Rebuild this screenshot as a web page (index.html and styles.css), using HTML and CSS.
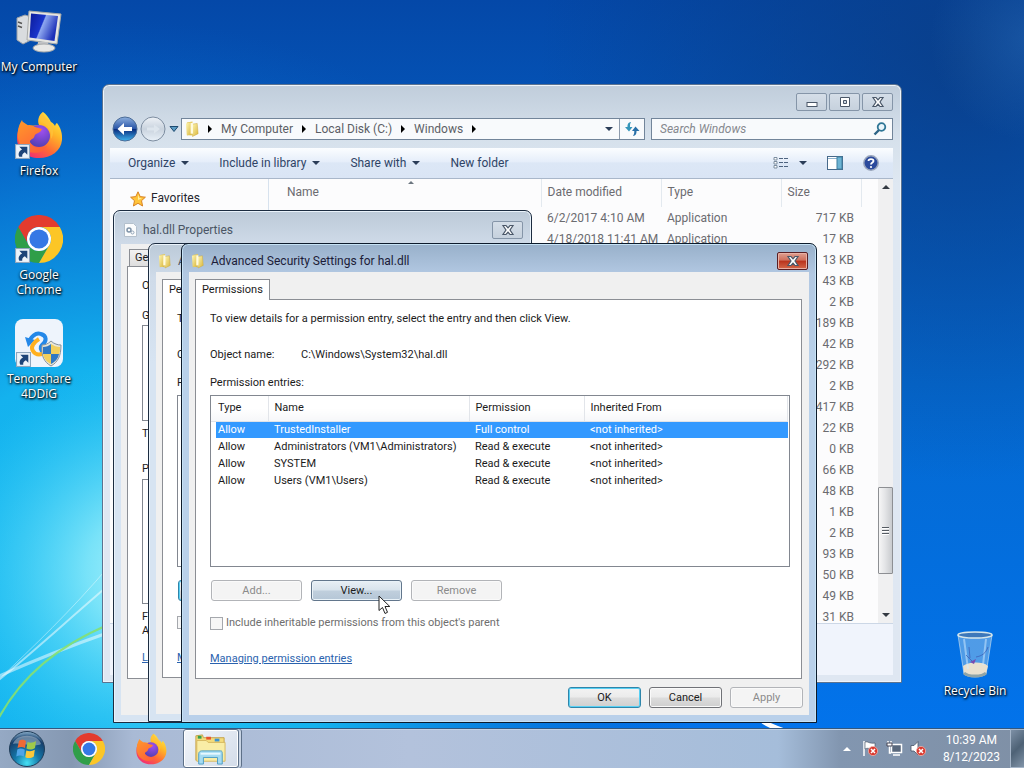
FILE: index.html
```html
<!DOCTYPE html>
<html lang="en">
<head>
    <meta charset="utf-8">
    <title>Desktop</title>
    <link rel="stylesheet" href="styles.css">
</head>
<body>
    <!-- shared icons -->
    <svg class="defs" width="0" height="0" aria-hidden="true">
        <defs>
            <linearGradient id="ff-body" x1="0.85" y1="0" x2="0.2" y2="1">
                <stop offset="0" stop-color="#fff14a"/>
                <stop offset="0.35" stop-color="#ffb628"/>
                <stop offset="0.65" stop-color="#ff6a35"/>
                <stop offset="1" stop-color="#f0267c"/>
            </linearGradient>
            <linearGradient id="ff-head" x1="0" y1="0" x2="0.6" y2="1">
                <stop offset="0" stop-color="#ff9a2a"/>
                <stop offset="1" stop-color="#ff6338"/>
            </linearGradient>
            <radialGradient id="ff-globe" cx="0.6" cy="0.25" r="0.8">
                <stop offset="0" stop-color="#a04ff0"/>
                <stop offset="1" stop-color="#4f3fb0"/>
            </radialGradient>
            <linearGradient id="folder-front" x1="0" y1="0" x2="1" y2="1">
                <stop offset="0" stop-color="#fff8b8"/>
                <stop offset="1" stop-color="#d9b63c"/>
            </linearGradient>
            <linearGradient id="screen" x1="0" y1="0" x2="1" y2="0.4">
                <stop offset="0" stop-color="#0a1a98"/>
                <stop offset="0.5" stop-color="#1a35cc"/>
                <stop offset="0.54" stop-color="#8fa8f0"/>
                <stop offset="1" stop-color="#1c30b8"/>
            </linearGradient>
            <radialGradient id="orb" cx="0.5" cy="0.9" r="0.9">
                <stop offset="0" stop-color="#45e0f4"/>
                <stop offset="0.4" stop-color="#1477a8"/>
                <stop offset="0.8" stop-color="#163f6c"/>
                <stop offset="1" stop-color="#8fb4d0"/>
            </radialGradient>
            <linearGradient id="back-blue" x1="0" y1="0" x2="0" y2="1">
                <stop offset="0" stop-color="#8eb0de"/>
                <stop offset="0.48" stop-color="#2a56a8"/>
                <stop offset="0.52" stop-color="#0b2f80"/>
                <stop offset="1" stop-color="#3fb4ee"/>
            </linearGradient>
            <linearGradient id="forward-grey" x1="0" y1="0" x2="0" y2="1">
                <stop offset="0" stop-color="#eef2f7"/>
                <stop offset="0.5" stop-color="#c9d3de"/>
                <stop offset="1" stop-color="#e9f1f8"/>
            </linearGradient>
        </defs>
        <symbol id="chrome" viewBox="0 0 48 48">
            <path fill="#e33b2e" d="M24 12H44.8A24 24 0 0 0 3.2 12L13.6 30A12 12 0 0 1 24 12z"/>
            <path fill="#2f9e49" d="M13.6 30L3.2 12A24 24 0 0 0 24 48L34.4 30A12 12 0 0 1 13.6 30z"/>
            <path fill="#fcc626" d="M34.4 30L24 48A24 24 0 0 0 44.8 12H24A12 12 0 0 1 34.4 30z"/>
            <circle cx="24" cy="24" r="12" fill="#fff"/>
            <circle cx="24" cy="24" r="9.6" fill="#3578e5"/>
        </symbol>
        <symbol id="firefox" viewBox="0 0 48 48">
            <path fill="url(#ff-body)" d="M28 1C31 3 34 7 36 11C38 12 39 13 40 15C41 12 42 12 42 12C46 17 47.500 23 47 29C46 40 36 47 24 47C11 47 2 39 2 27C2 20 4 15 8 11L14 15L24 14C22 9 24 4 28 1z"/>
            <circle cx="24" cy="25" r="11" fill="url(#ff-globe)"/>
            <path fill="url(#ff-head)" d="M3 21C3 16 5 12 7 9C8 12 9 14 11 15C14 13 17 14 20 16C22 17 25 17 27 18C26 21 23 22 21 23C19 24 20 27 17 28C15 29 14 31 16 33C19 38 27 38 32 35C28 43 16 44 9 38C4 34 2 27 3 21z"/>
            <path fill="#ffc23a" d="M27 11C33 14 37 20 36 28C40 22 38 14 33 9C30 6 28 4 28 1C24 4 23 8 27 11z" opacity=".8"/>
        </symbol>
        <symbol id="shortcut" viewBox="0 0 14 14">
            <rect x=".5" y=".5" width="13" height="13" fill="#eef4fa" stroke="#8fa6bd"/>
            <path fill="#1d4478" d="M4 2.500H11.500V10L9.200 7.700C7 9 6.500 10 6.800 12H4C2.500 9 4 6.500 6.600 5.200z"/>
        </symbol>
        <symbol id="folder" viewBox="0 0 16 16">
            <path fill="#e5c95c" d="M2 1L8 0V14L2 15z"/>
            <path fill="url(#folder-front)" d="M1 2L6 1L7 15L2 14z"/>
            <path fill="url(#folder-front)" d="M7 3L13 2L14 13L8 16z" stroke="#c9a63a" stroke-width=".5"/>
            <path fill="#fffbe0" d="M6 1.500H8.500V13H6z"/>
        </symbol>
        <symbol id="win-x" viewBox="0 0 14 12">
            <path fill="#fff" stroke="#4a5768" stroke-width="1.200" d="M2 1.500H5L7 3.800L9 1.500H12L9 6L12 10.500H9L7 8.200L5 10.500H2L5 6z"/>
        </symbol>
        <symbol id="tray-error" viewBox="0 0 10 10">
            <circle cx="5" cy="5" r="4.600" fill="#d93a30" stroke="#f2b0a8" stroke-width=".8"/>
            <path d="M3 3L7 7M7 3L3 7" stroke="#fff" stroke-width="1.500"/>
        </symbol>
    </svg>

    <main class="desktop">
        <svg class="wallpaper" viewBox="0 0 1024 768" preserveAspectRatio="none" aria-hidden="true">
            <defs>
                <linearGradient id="sky" x1="0" y1="0" x2="0" y2="1">
                    <stop offset="0" stop-color="#0448a8"/>
                    <stop offset="0.2" stop-color="#0558bc"/>
                    <stop offset="0.5" stop-color="#0469d0"/>
                    <stop offset="1" stop-color="#0274ee"/>
                </linearGradient>
                <radialGradient id="glow" gradientUnits="userSpaceOnUse" cx="120" cy="600" r="580">
                    <stop offset="0" stop-color="#1cc0f4"/>
                    <stop offset="0.4" stop-color="#14b2ee"/>
                    <stop offset="0.7" stop-color="#0a84dc" stop-opacity=".7"/>
                    <stop offset="1" stop-color="#0560c4" stop-opacity="0"/>
                </radialGradient>
                <radialGradient id="bright" gradientUnits="userSpaceOnUse" cx="150" cy="570" r="210">
                    <stop offset="0" stop-color="#b4f4fc"/>
                    <stop offset="0.3" stop-color="#90ecfa" stop-opacity=".8"/>
                    <stop offset="1" stop-color="#30ccf6" stop-opacity="0"/>
                </radialGradient>
                <radialGradient id="shade" gradientUnits="userSpaceOnUse" cx="960" cy="60" r="420">
                    <stop offset="0" stop-color="#0a3c84" stop-opacity=".8"/>
                    <stop offset="1" stop-color="#0a3c84" stop-opacity="0"/>
                </radialGradient>
                <radialGradient id="haze" gradientUnits="userSpaceOnUse" cx="1030" cy="40" r="100">
                    <stop offset="0" stop-color="#3a80c8" stop-opacity=".3"/>
                    <stop offset="1" stop-color="#3a80c8" stop-opacity="0"/>
                </radialGradient>
            </defs>
            <rect width="1024" height="768" fill="url(#sky)"/>
            <rect width="1024" height="768" fill="url(#shade)"/>
            <rect width="1024" height="768" fill="url(#haze)"/>
            <rect width="1024" height="768" fill="url(#glow)"/>
            <rect width="1024" height="768" fill="url(#bright)"/>
            <g fill="none" stroke="#fff" stroke-linecap="round">
                <path d="M-5 683C30 655 70 618 110 584" stroke-width="2" opacity=".5"/>
                <path d="M-5 683C35 645 70 612 110 565" stroke-width="1" opacity=".4"/>
                <path d="M-5 678C30 662 70 646 110 632" stroke-width="3" opacity=".5"/>
                <path d="M-5 725C20 675 60 645 110 624" stroke="#86e070" stroke-width="2" opacity=".9"/>
                <path d="M764 722C770 726 776 728 782 730" stroke-width="5"/>
            </g>
        </svg>

        <nav class="shortcuts">
            <button class="shortcut">
                <svg width="48" height="48" viewBox="0 -3 48 48" aria-hidden="true">
                    <path d="M2 8L10 5L16 7V30L8 34L2 30z" fill="#d9dcdf" stroke="#9aa0a8"/>
                    <path d="M3 12L7 13.500M3 16L7 17.500" stroke="#555" stroke-width="1.500"/>
                    <path d="M14 1L46 4L42 34L12 30z" fill="#e6e6e2" stroke="#a8aaa8"/>
                    <path d="M16 3.500L43 6L39.500 31L14.500 27.500z" fill="url(#screen)"/>
                    <path d="M23 32H33L34 37H22z" fill="#c2c4c6"/>
                    <ellipse cx="29" cy="38" rx="11" ry="4" fill="#e8e8e6" stroke="#a5a8aa"/>
                </svg>
                <span>My Computer</span>
            </button>
            <button class="shortcut">
                <svg width="48" height="48" viewBox="0 0 48 48" aria-hidden="true">
                    <use href="#firefox" width="48" height="48"/>
                    <use href="#shortcut" x="0" y="33" width="15" height="15"/>
                </svg>
                <span>Firefox</span>
            </button>
            <button class="shortcut">
                <svg width="48" height="48" viewBox="0 0 48 48" aria-hidden="true">
                    <use href="#chrome" width="48" height="48"/>
                    <use href="#shortcut" x="0" y="33" width="15" height="15"/>
                </svg>
                <span>Google Chrome</span>
            </button>
            <button class="shortcut">
                <svg width="48" height="48" viewBox="0 0 48 48" aria-hidden="true">
                    <rect width="48" height="48" rx="8" fill="#eef4fc"/>
                    <path d="M14 22C17 17 21 13 26 15C32 17 32 22 27 26C25 28 25 31 29 34" fill="none" stroke="#2488e8" stroke-width="4"/>
                    <path d="M10 18L13 28L20 21z" fill="#2488e8"/>
                    <path d="M24 20C19 23 15 28 18 32C21 37 27 36 30 33" fill="none" stroke="#ffb01f" stroke-width="4"/>
                    <path d="M36 22C39 25 43 26 46 26C46 37 43 43 36 47C29 43 26 37 27 26C30 26 33 25 36 22z" fill="#e8e6d8" stroke="#86929c"/>
                    <path d="M36 25V35H28C28 32 28 31 28 28C31 28 34 27 36 25zM36 35H44C43 40 40 43 36 45z" fill="#2f78c4"/>
                    <path d="M36 25C39 27 42 28 45 28C45 31 45 33 44 35H36zM36 35V45C32 43 29 40 28 35z" fill="#f2cf5c"/>
                    <use href="#shortcut" x="1" y="33" width="15" height="15"/>
                </svg>
                <span>Tenorshare 4DDiG</span>
            </button>
        </nav>

        <button class="shortcut recycle-bin">
            <svg width="38" height="48" viewBox="0 0 38 48" aria-hidden="true">
                <path d="M2 4L8 43C12 47 26 47 30 43L36 4z" fill="#8fc0ea" fill-opacity=".55" stroke="#bcd8ee" stroke-opacity=".7"/>
                <path d="M7 35C12 31 26 30 32 35L30 43C26 46 12 46 8 43z" fill="#e9e0cf"/>
                <path d="M8 8L12 38M30 8L27 34" stroke="#d4ecff" stroke-width="2" opacity=".5"/>
                <path d="M10 24L17 31M13 16L14 27M32 16C30 22 26 25 20 26" stroke="#3a58b0" stroke-opacity=".7" fill="none"/>
                <path d="M14 31L20 28L18 33z" fill="#7a4cb0"/>
                <path d="M8 42C12 46 26 46 30 42" stroke="#8fa4a8" stroke-width="3" fill="none"/>
                <ellipse cx="19" cy="4" rx="17" ry="3" fill="#3d78ba" stroke="#d6e6ea" stroke-width="1.500"/>
            </svg>
            <span>Recycle Bin</span>
        </button>

        <section class="window explorer" aria-label="Windows">
            <div class="explorer-title">
                <button class="win-btn" aria-label="Minimize"><svg width="14" height="12" viewBox="0 0 14 12"><rect x="2" y="6.500" width="10" height="4" fill="#fff" stroke="#4a5768"/></svg></button>
                <button class="win-btn" aria-label="Maximize"><svg width="14" height="12" viewBox="0 0 14 12"><path fill="#fff" fill-rule="evenodd" stroke="#4a5768" d="M2.500 1.500H11.500V10.500H2.500zM5.500 4.500V7.500H8.500V4.500z"/></svg></button>
                <button class="win-btn" aria-label="Close"><svg width="14" height="12"><use href="#win-x"/></svg></button>
            </div>
            <div class="address-row">
                <div class="history">
                    <button aria-label="Back"><svg width="27" height="26" viewBox="0 0 27 26"><circle cx="13" cy="13" r="12" fill="url(#back-blue)" stroke="#4c6d98"/><path d="M5.500 13L12 7V11H20V15H12V19z" fill="#fff"/></svg></button>
                    <button aria-label="Forward" disabled><svg width="27" height="26" viewBox="0 0 27 26"><circle cx="13" cy="13" r="12" fill="url(#forward-grey)" stroke="#7d8da0"/><path d="M7 11.500H14V8.500L20 13L14 17.500V14.500H7z" fill="#dde5ed"/></svg></button>
                    <button class="recent" aria-label="Recent pages"><svg width="10" height="8" viewBox="0 0 10 8"><path d="M1 1.500H9L5 6.500z" fill="#5b9cc4" stroke="#1d4a70"/></svg></button>
                </div>
                <div class="address">
                    <svg class="address-icon" width="15" height="16"><use href="#folder"/></svg>
                    <i class="crumb-arrow"></i>
                    <button class="crumb">My Computer</button>
                    <i class="crumb-arrow"></i>
                    <button class="crumb">Local Disk (C:)</button>
                    <i class="crumb-arrow"></i>
                    <button class="crumb">Windows</button>
                    <i class="crumb-arrow"></i>
                    <button class="address-drop" aria-label="Previous locations"><i class="down-arrow"></i></button>
                    <button class="refresh" aria-label="Refresh"><svg width="16" height="14" viewBox="0 0 16 14"><path d="M7 0C3.500 .5 3.500 3 3.500 5H1L5 9.500L8.500 5H6C6 3 6 1.500 7 0z" fill="#3596ba"/><path d="M9 14C12.500 13.500 12.500 11 12.500 9H15.500L11.500 4.500L8 9H10.300C10.300 11 10 12.500 9 14z" fill="#286fa8"/></svg></button>
                </div>
                <div class="search">
                    <input type="text" placeholder="Search Windows" aria-label="Search Windows">
                    <svg width="14" height="14" viewBox="0 0 14 14" aria-hidden="true"><circle cx="8.500" cy="5" r="3.800" fill="#eaf6fc" stroke="#2f7696" stroke-width="1.800"/><path d="M6 8L1.500 12.500" stroke="#2d6486" stroke-width="2.400"/></svg>
                </div>
            </div>
            <div class="toolbar">
                <button>Organize <i class="down-arrow"></i></button>
                <button>Include in library <i class="down-arrow"></i></button>
                <button>Share with <i class="down-arrow"></i></button>
                <button>New folder</button>
                <span class="toolbar-right">
                    <button aria-label="Change your view">
                        <svg width="16" height="14" viewBox="0 0 16 14"><path d="M1 1.500H4V4H1zM1 5.500H4V8H1zM1 9.500H4V12H1z" fill="#fff" stroke="#7d8ea0"/><path d="M6 2.500H10M6 6.500H10M6 10.500H10M11 2.500H15M11 6.500H15M11 10.500H15" stroke="#4e6480"/></svg>
                        <i class="down-arrow"></i>
                    </button>
                    <button aria-label="Show the preview pane"><svg width="16" height="14" viewBox="0 0 16 14"><rect x=".5" y=".5" width="15" height="13" fill="#fff" stroke="#46698a"/><path d="M1 2.500H15" stroke="#8cb0cc"/><rect x="10" y="1" width="5" height="12" fill="#6db4d4" stroke="#3e7ea0"/></svg></button>
                    <button aria-label="Get help"><svg width="16" height="16" viewBox="0 0 16 16"><circle cx="8" cy="8" r="7.200" fill="#2b4a9c" stroke="#9aa6bc" stroke-width="1.500"/><path d="M5.500 6C5.500 3.500 10.500 3.500 10.500 6C10.500 7.500 8 7.500 8 9.500" fill="none" stroke="#fff" stroke-width="1.800"/><circle cx="8" cy="12" r="1.100" fill="#fff"/></svg></button>
                </span>
            </div>
            <div class="explorer-body">
                <aside class="nav-pane">
                    <a href="#" class="favorites">
                        <svg width="16" height="16" viewBox="0 0 16 16" aria-hidden="true"><path d="M8 .8L10.200 5.600L15.400 6.200L11.500 9.700L12.600 15L8 12.300L3.400 15L4.500 9.700L.6 6.200L5.800 5.600z" fill="#ffc43a" stroke="#d98324"/><path d="M8 3.500L9.300 7L12 7.500L8 9z" fill="#fff0a0"/></svg>
                        Favorites
                    </a>
                </aside>
                <div class="file-list">
                    <i class="sort-arrow"></i>
                    <table class="files">
                        <colgroup><col class="c-name"><col class="c-date"><col class="c-type"><col class="c-size"><col></colgroup>
                        <thead>
                            <tr><th>Name</th><th>Date modified</th><th>Type</th><th>Size</th><th></th></tr>
                        </thead>
                        <tbody>
                            <tr><td></td><td>6/2/2017 4:10 AM</td><td>Application</td><td>717 KB</td><td></td></tr>
                            <tr><td></td><td>4/18/2018 11:41 AM</td><td>Application</td><td>17 KB</td><td></td></tr>
                            <tr><td></td><td></td><td></td><td>13 KB</td><td></td></tr>
                            <tr><td></td><td></td><td></td><td>43 KB</td><td></td></tr>
                            <tr><td></td><td></td><td></td><td>2 KB</td><td></td></tr>
                            <tr><td></td><td></td><td></td><td>189 KB</td><td></td></tr>
                            <tr><td></td><td></td><td></td><td>42 KB</td><td></td></tr>
                            <tr><td></td><td></td><td></td><td>292 KB</td><td></td></tr>
                            <tr><td></td><td></td><td></td><td>2 KB</td><td></td></tr>
                            <tr><td></td><td></td><td></td><td>417 KB</td><td></td></tr>
                            <tr><td></td><td></td><td></td><td>22 KB</td><td></td></tr>
                            <tr><td></td><td></td><td></td><td>0 KB</td><td></td></tr>
                            <tr><td></td><td></td><td></td><td>66 KB</td><td></td></tr>
                            <tr><td></td><td></td><td></td><td>48 KB</td><td></td></tr>
                            <tr><td></td><td></td><td></td><td>1 KB</td><td></td></tr>
                            <tr><td></td><td></td><td></td><td>2 KB</td><td></td></tr>
                            <tr><td></td><td></td><td></td><td>93 KB</td><td></td></tr>
                            <tr><td></td><td></td><td></td><td>50 KB</td><td></td></tr>
                            <tr><td></td><td></td><td></td><td>49 KB</td><td></td></tr>
                            <tr><td></td><td></td><td></td><td>31 KB</td><td></td></tr>
                        </tbody>
                    </table>
                </div>
                <div class="scrollbar">
                    <i class="scroll-up"></i>
                    <span class="thumb"><i></i><i></i><i></i></span>
                    <i class="scroll-down"></i>
                </div>
            </div>
            <div class="details-pane"></div>
        </section>

        <section class="window dialog properties" aria-label="hal.dll Properties">
            <div class="title">
                <svg width="13" height="14" viewBox="0 0 13 14" aria-hidden="true"><path d="M.5 .5H9.500L12.500 3.500V13.500H.5z" fill="#fbfcfd" stroke="#b4c0cc"/><circle cx="5" cy="7" r="2" fill="none" stroke="#7f93a8" stroke-width="1.500"/><circle cx="8.500" cy="9.500" r="1.500" fill="none" stroke="#93a5b8"/></svg>
                <h2>hal.dll Properties</h2>
                <button class="win-btn" aria-label="Close"><svg width="14" height="12"><use href="#win-x"/></svg></button>
            </div>
            <div class="dialog-body">
                <div class="tabs"><button class="tab">Ge</button></div>
                <div class="panel">
                    <p>O</p>
                    <p>G</p>
                    <div class="box users"></div>
                    <p class="edit-note">T</p>
                    <p>P</p>
                    <div class="box rights"></div>
                    <p class="note">F<br>A</p>
                    <a href="#">L</a>
                </div>
                <div class="actions"></div>
            </div>
        </section>

        <section class="window dialog settings settings-back" aria-label="Advanced Security Settings">
            <div class="title">
                <svg width="14" height="16" aria-hidden="true"><use href="#folder"/></svg>
                <h2>A</h2>
            </div>
            <div class="dialog-body">
                <div class="tabs"><button class="tab current">Pe</button></div>
                <div class="panel">
                    <p>T</p>
                    <p class="object">O</p>
                    <p>P</p>
                    <div class="entries"></div>
                    <div class="entry-actions"><button class="btn wide focus" aria-label="Change"></button></div>
                    <label class="inherit"><input type="checkbox" disabled aria-label="Include"></label>
                    <a href="#">M</a>
                </div>
                <div class="actions"></div>
            </div>
        </section>

        <section class="window dialog settings settings-front" aria-label="Advanced Security Settings for hal.dll">
            <div class="title">
                <svg width="14" height="16" aria-hidden="true"><use href="#folder"/></svg>
                <h2>Advanced Security Settings for hal.dll</h2>
                <button class="win-btn red" aria-label="Close"><svg width="14" height="12"><use href="#win-x"/></svg></button>
            </div>
            <div class="dialog-body">
                <div class="tabs"><button class="tab current">Permissions</button></div>
                <div class="panel">
                    <p>To view details for a permission entry, select the entry and then click View.</p>
                    <p class="object"><span>Object name:</span> C:\Windows\System32\hal.dll</p>
                    <p>Permission entries:</p>
                    <div class="entries">
                        <table>
                            <colgroup><col class="e-type"><col class="e-name"><col class="e-perm"><col></colgroup>
                            <thead>
                                <tr><th>Type</th><th>Name</th><th>Permission</th><th>Inherited From</th></tr>
                            </thead>
                            <tbody>
                                <tr class="selected"><td>Allow</td><td>TrustedInstaller</td><td>Full control</td><td>&lt;not inherited&gt;</td></tr>
                                <tr><td>Allow</td><td>Administrators (VM1\Administrators)</td><td>Read &amp; execute</td><td>&lt;not inherited&gt;</td></tr>
                                <tr><td>Allow</td><td>SYSTEM</td><td>Read &amp; execute</td><td>&lt;not inherited&gt;</td></tr>
                                <tr><td>Allow</td><td>Users (VM1\Users)</td><td>Read &amp; execute</td><td>&lt;not inherited&gt;</td></tr>
                            </tbody>
                        </table>
                    </div>
                    <div class="entry-actions">
                        <button class="btn wide" disabled>Add...</button>
                        <button class="btn wide hot">View...</button>
                        <button class="btn wide" disabled>Remove</button>
                    </div>
                    <label class="inherit"><input type="checkbox" disabled>Include inheritable permissions from this object's parent</label>
                    <a href="#">Managing permission entries</a>
                </div>
                <div class="actions">
                    <button class="btn focus">OK</button>
                    <button class="btn">Cancel</button>
                    <button class="btn" disabled>Apply</button>
                </div>
            </div>
        </section>

        <svg class="cursor" width="13" height="20" viewBox="0 0 13 20" aria-hidden="true"><path d="M1 1V15.500L4.500 12.500L7 18.500L9.500 17.300L7 11.500H11.800z" fill="#fff" stroke="#222"/></svg>
    </main>

    <footer class="taskbar">
        <button class="start" aria-label="Start">
            <svg width="38" height="38" viewBox="0 0 38 38">
                <circle cx="19" cy="19" r="17.500" fill="url(#orb)" stroke="#1f3c58"/>
                <path d="M5 14C8 3 30 3 33 14C26 18 14 12 5 14z" fill="#fff" opacity=".35"/>
                <path d="M11 11C14 9 16 10 18 11L17 18C14 16.500 12 17 9.500 18z" fill="#ee6a35"/>
                <path d="M19.500 12C22 13 25 13 28 11L27 18C24 20 21 20 18.500 18.500z" fill="#9fca4a"/>
                <path d="M9.300 19.500C12 18 14 18.500 16.800 19.800L15.800 26.500C13 25 11 25 8.300 26.500z" fill="#4fa4e8"/>
                <path d="M18.300 20.500C21 21.500 24 21.500 26.800 19.800L25.800 26.500C23 28.500 20 28.500 17.300 27.200z" fill="#fbc83a"/>
            </svg>
        </button>
        <button class="task" aria-label="Google Chrome"><svg width="32" height="32"><use href="#chrome"/></svg></button>
        <button class="task" aria-label="Firefox"><svg width="32" height="32"><use href="#firefox"/></svg></button>
        <button class="task open" aria-label="Windows Explorer">
            <svg width="34" height="32" viewBox="0 0 36 34">
                <path d="M3 3L10 2L11 5H33V29H3z" fill="#f4dc7c" stroke="#c4a046"/>
                <path d="M5 3H9V6H5z" fill="#36a04c"/><path d="M14 4H19V7H14z" fill="#e8522c"/><path d="M23 6H28V9H23z" fill="#3a92d4"/>
                <path d="M4 8H14L16 10H34V30H4z" fill="#f9eda6" stroke="#d6b860"/>
                <path d="M6 33V22C6 20 8 19 9 19H29C31 19 31 20 31 22V33H26V26H11V33z" fill="#a6dcf2" stroke="#4a9cc4"/>
                <path d="M8 22H29" stroke="#e6f8ff" stroke-width="2"/>
            </svg>
        </button>
        <div class="tray">
            <button class="tray-up" aria-label="Show hidden icons"></button>
            <button aria-label="Action Center"><svg width="17" height="17" viewBox="0 0 17 17"><path d="M2 1V16" stroke="#fff" stroke-width="1.500"/><path d="M3 2C6 1 7 4 13 3V9C8 10 7 7 3 9z" fill="#fff" stroke="#3d4a5c" stroke-width=".6"/><use href="#tray-error" x="6" y="6" width="10" height="10"/></svg></button>
            <button aria-label="Network"><svg width="17" height="17" viewBox="0 0 17 17"><rect x="5.500" y="4.500" width="10" height="8" fill="#59687c" stroke="#fff" stroke-width="1.500"/><path d="M7 15H14M3.500 6V13H5M2 1V3M5 1V3" stroke="#fff" stroke-width="1.500" fill="none"/><path d="M1 3H6V6H1z" fill="#fff" stroke="#445"/></svg></button>
            <button aria-label="Volume"><svg width="17" height="17" viewBox="0 0 17 17"><path d="M1 5.500H4L8 1.500V15L4 11H1z" fill="#fff" stroke="#465468" stroke-width=".8"/><use href="#tray-error" x="6" y="6" width="10" height="10"/></svg></button>
            <button class="clock">10:39 AM<br>8/12/2023</button>
            <button class="show-desktop" aria-label="Show desktop"></button>
        </div>
    </footer>
</body>
</html>
```

FILE: styles.css
```css
* {
    box-sizing: border-box;
}

body {
    margin: 0;
    height: 100vh;
    display: flex;
    flex-direction: column;
    overflow: hidden;
    font-family: Roboto, "Noto Sans", sans-serif;
    font-size: 12px;
    color: #1b1b1b;
}

button,
input {
    font: inherit;
    color: inherit;
}

button {
    border: none;
    padding: 0;
    background: none;
    white-space: nowrap;
}

svg {
    display: block;
    flex: none;
}

p,
h2 {
    margin: 0;
    font-size: inherit;
    font-weight: normal;
}

.defs {
    position: absolute;
}

/* desktop */
.desktop {
    position: relative;
    flex: 1;
    min-height: 0;
    background: #0563c9;
}

.wallpaper {
    position: absolute;
    width: 100%;
    height: 100vh;
}

.shortcuts {
    position: relative;
    display: grid;
    grid-auto-rows: 104px;
    width: 78px;
    padding-top: 2px;
}

.shortcut {
    display: flex;
    flex-direction: column;
    align-items: center;
    gap: 4px;
    padding-top: 5px;
    color: #fff;
    font-family: "Open Sans", "Noto Sans", sans-serif;
    line-height: 15px;
    white-space: normal;
    text-shadow: 1px 1px 2px #000, 0 1px 3px #000;
}

.recycle-bin {
    position: absolute;
    right: 10px;
    bottom: 30px;
    width: 78px;
}

/* windows */
.window {
    position: absolute;
    display: flex;
    flex-direction: column;
    border: 1px solid #1c2c40;
    border-radius: 7px 7px 0 0;
}

.explorer {
    left: 102px;
    right: 122px;
    top: 84px;
    bottom: 45px;
    padding: 0 8px 7px 7px;
    border-color: #5c7390;
    background: linear-gradient(#c0cddb, #d5e0eb 50px, #dfe8f2 100px, #dfe7f2);
    box-shadow: inset 0 0 0 1px #eef4fa;
    color: #6b6b70;
}

.explorer-title {
    display: flex;
    justify-content: flex-end;
    gap: 2px;
    height: 30px;
    padding-top: 8px;
}

.win-btn {
    display: flex;
    align-items: center;
    justify-content: center;
    width: 31px;
    height: 18px;
    border: 1px solid #8595a8;
    border-radius: 2px;
    background: linear-gradient(#d5dee8, #c6d1dd);
}

.win-btn.red {
    border-color: #5a1f24;
    background: linear-gradient(#e0a091, #cf6f5c 45%, #b8321c 50%, #d4684a);
    box-shadow: inset 0 0 0 1px #e8b0a4;
}

.address-row {
    display: flex;
    align-items: center;
    height: 33px;
    padding: 0 0 6px 2px;
}

.history {
    display: flex;
    align-items: center;
    gap: 1px;
}

.recent {
    padding: 0 2px 0 1px;
}

.address,
.search {
    display: flex;
    align-items: center;
    height: 22px;
    border: 1px solid #72859a;
    background: #f8fafc;
}

.address {
    flex: 1;
    padding-left: 3px;
}

.address-icon {
    margin-right: 8px;
}

.crumb {
    padding: 0 9px;
    color: #5c5f66;
}

.crumb-arrow {
    border: 4px solid transparent;
    border-left-color: #000;
    border-right: none;
}

.down-arrow {
    display: inline-block;
    border: 4px solid transparent;
    border-top-color: #2b3d58;
    border-bottom: none;
}

.address-drop {
    display: flex;
    margin-left: auto;
    padding: 0 6px;
}

.refresh {
    display: flex;
    align-items: center;
    justify-content: center;
    width: 25px;
    height: 20px;
    border-left: 1px solid #8c9aac;
}

.search {
    width: 242px;
    margin-left: 6px;
    padding: 0 5px 0 8px;
}

.search input {
    flex: 1;
    min-width: 0;
    padding: 0;
    border: none;
    background: none;
    font-style: italic;
}

.search input::placeholder {
    color: #85888e;
}

.toolbar {
    display: flex;
    align-items: center;
    gap: 30px;
    height: 31px;
    padding: 0 14px 0 18px;
    border-bottom: 1px solid #a9b7ca;
    background: linear-gradient(#fbfdff, #e6eefa 45%, #dce7f6 50%, #dae5f5);
    color: #2f4466;
}

.toolbar button,
.toolbar-right {
    display: flex;
    align-items: center;
    gap: 6px;
}

.toolbar-right {
    margin-left: auto;
    gap: 20px;
}

.toolbar-right button {
    gap: 10px;
}

.explorer-body {
    display: flex;
    flex: 1;
    min-height: 0;
    background: #fcfcfd;
}

.nav-pane {
    width: 159px;
    padding: 11px 20px;
    border-right: 1px solid #d7e2ee;
}

.favorites {
    display: flex;
    align-items: center;
    gap: 5px;
    line-height: 17px;
    color: #26262e;
    text-decoration: none;
}

.file-list {
    position: relative;
    flex: 1;
    overflow: hidden;
}

.sort-arrow {
    position: absolute;
    left: 139px;
    top: 2px;
    border: 3px solid transparent;
    border-bottom-color: #6c7680;
    border-top: none;
}

.files {
    width: 100%;
    table-layout: fixed;
    border-collapse: collapse;
}

.files th,
.files td {
    height: 21px;
    padding: 0 7px 0 6px;
    font-weight: normal;
    text-align: left;
    white-space: nowrap;
    line-height: 16px;
}

.files th {
    height: 28px;
    padding-bottom: 2px;
    border-right: 1px solid #e3e9ef;
}

.files th:last-child {
    border-right: none;
}

.files th:first-child {
    padding-left: 18px;
}

.files td:nth-child(4) {
    text-align: right;
}

.c-name {
    width: 272px;
}

.c-date,
.c-type {
    width: 120px;
}

.c-size {
    width: 80px;
}

.scrollbar {
    display: flex;
    flex-direction: column;
    align-items: center;
    justify-content: flex-end;
    width: 15px;
    padding: 6px 0;
    background: #f0f0f1;
}

.scroll-up,
.scroll-down {
    border: 4px solid transparent;
}

.scroll-up {
    margin-bottom: auto;
    border-bottom-color: #333a42;
    border-top: none;
}

.scroll-down {
    margin-top: 39px;
    border-top-color: #333a42;
    border-bottom: none;
}

.thumb {
    display: flex;
    flex-direction: column;
    align-items: center;
    justify-content: center;
    gap: 1px;
    width: 15px;
    height: 87px;
    border: 1px solid #8d8f93;
    border-radius: 1px;
    background: linear-gradient(90deg, #f6f6f6, #e4e5e7 45%, #c9cbce);
}

.thumb i {
    width: 7px;
    height: 2px;
    background: #555b62;
    border-bottom: 1px solid #fff;
}

.details-pane {
    height: 52px;
    border-top: 1px solid #ccd7e6;
    background: #f0f4fc;
}

/* dialogs */
.dialog {
    padding: 0 7px 7px;
    background: linear-gradient(#bccad8, #cfdbe9 34px, #d7e4f2 120px, #d7e4f2);
    box-shadow: inset 0 0 0 1px #eaf3fb;
    font-size: 11px;
    line-height: 14px;
}

.title {
    display: flex;
    flex: none;
    align-items: center;
    gap: 6px;
    height: 28px;
    padding: 5px 1px 0 2px;
    color: #4a5564;
    font-size: 12px;
}

.title .win-btn {
    margin-left: auto;
}

.dialog-body {
    display: flex;
    flex-direction: column;
    flex: 1;
    padding: 7px 6px 0;
    background: #f0f0f0;
}

.tabs {
    display: flex;
}

.tab {
    height: 20px;
    padding: 0 6px;
    border: 1px solid #8b8e94;
    border-bottom: none;
    background: linear-gradient(#f2f2f2, #dedede);
    text-align: left;
}

.tab.current {
    position: relative;
    min-width: 71px;
    height: 21px;
    margin-bottom: -1px;
    background: #fff;
}

.panel {
    flex: 1;
    margin-right: 1px;
    padding: 12px 11px 12px 14px;
    border: 1px solid #8b8e94;
    background: #fff;
}

.dialog a {
    color: #2a62ae;
}

.actions {
    display: flex;
    justify-content: flex-end;
    gap: 8px;
    min-height: 36px;
    padding-top: 8px;
}

.btn {
    width: 73px;
    height: 21px;
    border: 1px solid #707277;
    border-radius: 3px;
    background: linear-gradient(#f3f3f3, #ebebeb 48%, #dcdcdc 52%, #cfcfcf);
    box-shadow: inset 0 0 0 1px #fafafa;
}

.btn:disabled {
    border-color: #b2b4b8;
    background: #f4f4f4;
    color: #8b8b8b;
}

.btn.focus {
    border-color: #2f85aa;
    box-shadow: inset 0 0 0 1px #58d0f4;
}

.btn.hot {
    border-color: #62768c;
    background: linear-gradient(#e8eff5, #d8e3ec 48%, #c0cfdd 52%, #b5c6d6);
    box-shadow: inset 0 0 0 1px #e9f2f8;
}

.btn.wide {
    width: 91px;
}

.properties {
    left: 113px;
    top: 210px;
    width: 419px;
    height: 513px;
}

.properties .title {
    height: 33px;
    padding-left: 3px;
}

.properties .dialog-body {
    padding-top: 5px;
}

.properties .tab {
    width: 50px;
    height: 17px;
    margin-left: 2px;
    padding: 0 5px;
}

.properties .panel p {
    margin-bottom: 16px;
}

.properties .box {
    border: 1px solid #828790;
}

.properties .users {
    height: 96px;
    margin-top: -14px;
}

.properties .rights {
    height: 125px;
    margin: -13px 0 6px;
}

.properties .edit-note {
    padding: 6px 0 5px;
}

.properties .panel .note {
    margin-bottom: 13px;
}

.settings {
    top: 243px;
    width: 636px;
}

.settings-back {
    left: 148px;
}

.settings-front {
    left: 181px;
    border-color: #0d1b2c;
    background: linear-gradient(#98b0ca, #b2c8e2 30px, #b9d1ea 120px, #b9d0ea);
    box-shadow: inset 0 0 0 1px #c6e2f5;
}

.settings-front .title {
    color: #1c1c38;
}

.object {
    display: flex;
    margin: 22px 0 14px;
}

.object span {
    width: 91px;
}

.entries {
    height: 172px;
    margin: 5px 0 13px;
    padding-right: 1px;
    border: 1px solid #828790;
}

.entries table {
    width: 100%;
    table-layout: fixed;
    border-collapse: collapse;
}

.entries th,
.entries td {
    height: 17px;
    padding: 0 0 0 6px;
    font-weight: normal;
    text-align: left;
    white-space: nowrap;
}

.entries th {
    height: 25px;
    border-right: 1px solid #e2e5ea;
    border-bottom: 1px solid #e0e3e8;
    background: linear-gradient(#fff 50%, #f6f7f9);
}

.entries th:first-child,
.entries td:first-child {
    padding-left: 7px;
}

.e-type {
    width: 57px;
}

.e-name {
    width: 201px;
}

.e-perm {
    width: 115px;
}

.entries .selected td {
    background: #3399ff;
    color: #fff;
}

.entries .selected td:first-child {
    background: linear-gradient(90deg, #fff 5px, #3399ff 5px);
}

.entry-actions {
    display: flex;
    gap: 9px;
    padding-left: 1px;
}

.inherit {
    display: flex;
    align-items: center;
    gap: 3px;
    margin: 15px 0 22px;
    color: #6e6e6e;
}

.inherit input {
    appearance: none;
    width: 13px;
    height: 13px;
    margin: 0;
    border: 1px solid #a5a8ad;
    background: #f6f6f6;
}

.cursor {
    position: absolute;
    left: 378px;
    top: 595px;
}

/* taskbar */
.taskbar {
    position: relative;
    display: flex;
    align-items: center;
    height: 40px;
    border-top: 1px solid #34587f;
    background: linear-gradient(90deg, #95a9c4, #8598b2 7%, #a9bad5 13%, #b3c2dc 40%, #a5bdda 76%, #8296b0 82%, #7f90a6);
    box-shadow: inset 0 1px 0 #c3d3e6;
}

.start {
    padding: 0 8px;
}

.task {
    display: flex;
    align-items: center;
    justify-content: center;
    width: 62px;
    height: 39px;
    padding-left: 7px;
}

.task.open {
    width: 56px;
    margin-left: 5px;
    padding: 0 3px 0 0;
    border: 1px solid #5d7088;
    border-radius: 3px;
    background: linear-gradient(135deg, #f2f5fa, #d3dce9);
    box-shadow: inset 0 0 0 1px #fff, 2px 0 0 #c8d4e4, 3px 0 0 #5d7088;
}

.tray {
    display: flex;
    align-items: center;
    gap: 7px;
    height: 100%;
    margin-left: auto;
    color: #fff;
}

.tray-up {
    margin-right: 4px;
    border: 4px solid transparent;
    border-bottom-color: #fff;
    border-top: none;
}

.clock {
    padding: 0 3px 0 9px;
    line-height: 17px;
    text-align: center;
}

.show-desktop {
    width: 14px;
    height: 100%;
    border: 1px solid #a5b5c8;
    border-right: none;
    background: linear-gradient(135deg, #7d90a6, #4e6276 50%, #8194a8);
}
```
